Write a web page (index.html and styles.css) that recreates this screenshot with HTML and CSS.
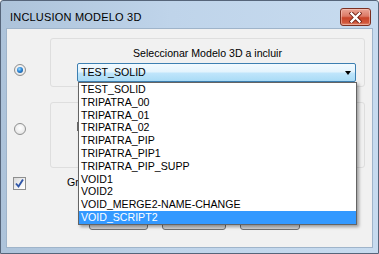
FILE: index.html
```html
<!DOCTYPE html>
<html>
<head>
<meta charset="utf-8">
<title>INCLUSION MODELO 3D</title>
<link rel="stylesheet" href="styles.css">
</head>
<body>
<div class="window">
  <div class="titlebar">
    <span class="title">INCLUSION MODELO 3D</span>
    <button class="close" aria-label="Cerrar">
      <svg width="13" height="11" viewBox="0 0 13 11">
        <path d="M2.5 1.5 L10.5 9.5 M10.5 1.5 L2.5 9.5" stroke="#6b1c10" stroke-width="4" stroke-linecap="square" fill="none"/>
        <path d="M2.5 1.5 L10.5 9.5 M10.5 1.5 L2.5 9.5" stroke="#ffffff" stroke-width="2.4" stroke-linecap="square" fill="none"/>
      </svg>
    </button>
  </div>
  <div class="client">
    <div class="row row1">
      <span class="radio checked"></span>
      <div class="group g1">
        <div class="glabel">Seleccionar Modelo 3D a incluir</div>
        <div class="combo-wrap">
          <div class="combo"><span class="combo-text">TEST_SOLID</span><span class="arrow"></span></div>
          <ul class="list">
            <li>TEST_SOLID</li>
            <li>TRIPATRA_00</li>
            <li>TRIPATRA_01</li>
            <li>TRIPATRA_02</li>
            <li>TRIPATRA_PIP</li>
            <li>TRIPATRA_PIP1</li>
            <li>TRIPATRA_PIP_SUPP</li>
            <li>VOID1</li>
            <li>VOID2</li>
            <li>VOID_MERGE2-NAME-CHANGE</li>
            <li class="sel">VOID_SCRIPT2</li>
          </ul>
        </div>
      </div>
    </div>
    <div class="row row2">
      <span class="radio"></span>
      <div class="group g2">
        <div class="field"></div>
      </div>
    </div>
    <div class="row row3">
      <span class="check">
        <svg width="11" height="11" viewBox="0 0 11 11">
          <path d="M2 5.5 L4.5 8.5 L9 1.5" stroke="#2f56a8" stroke-width="1.9" fill="none"/>
        </svg>
      </span>
      <span class="clabel">Gr</span>
    </div>
    <div class="buttons">
      <button class="btn b1" aria-label="Aceptar"></button>
      <button class="btn b2" aria-label="Cancelar"></button>
      <button class="btn b3" aria-label="Ayuda"></button>
    </div>
  </div>
</div>
</body>
</html>
```
FILE: styles.css
```css
html, body {
  margin: 0;
  padding: 0;
}
body {
  width: 379px;
  height: 254px;
  overflow: hidden;
  background: #ffffff;
  font-family: "Liberation Sans", Arial, sans-serif;
}
.window {
  box-sizing: border-box;
  width: 379px;
  height: 254px;
  border: 1px solid #56657a;
  border-radius: 3px 3px 0 0;
  background: linear-gradient(90deg, #adc3da 0%, #bfd4ea 45%, #c7dbef 100%);
  padding: 0 5px 5px 5px;
  display: flex;
  flex-direction: column;
}
.titlebar {
  height: 27px;
  flex: none;
  display: flex;
  justify-content: space-between;
  align-items: flex-start;
  padding: 0 2px 0 4px;
}
.title {
  margin-top: 10px;
  font-size: 11px;
  line-height: 13px;
  color: #000;
  letter-spacing: 0.2px;
}
.close {
  margin-top: 7px;
  width: 31px;
  height: 18px;
  box-sizing: border-box;
  border: 1px solid #7b3022;
  border-radius: 3px;
  padding: 0;
  background: linear-gradient(#eaa596 0%, #dc7a66 45%, #c84429 55%, #d2583c 85%, #e08a70 100%);
  display: flex;
  align-items: center;
  justify-content: center;
  box-shadow: inset 0 0 0 1px rgba(255,220,210,0.45);
}
.close svg { display: block; }
.client {
  flex: 1;
  box-sizing: border-box;
  border: 1px solid #9fb4ca;
  background: #f1f1f1;
  padding: 9px 7px 0 6px;
  display: flex;
  flex-direction: column;
  font-size: 10.6px;
  color: #000;
}
.row {
  display: flex;
  align-items: flex-start;
}
.radio {
  box-sizing: border-box;
  width: 12px;
  height: 12px;
  border-radius: 50%;
  border: 1px solid #8f9090;
  background: radial-gradient(circle at 50% 40%, #ffffff 0%, #ececec 60%, #d6d6d6 100%);
  display: flex;
  align-items: center;
  justify-content: center;
  margin-left: 1px;
  flex: none;
}
.radio.checked::after {
  content: "";
  width: 6px;
  height: 6px;
  border-radius: 50%;
  background: radial-gradient(circle at 40% 35%, #9fdcff 0%, #2c86d6 45%, #0e437f 100%);
}
.row1 .radio { margin-top: 26px; }
.row2 .radio { margin-top: 21px; }
.group {
  box-sizing: border-box;
  flex: 1;
  margin-left: 24px;
  border: 1px solid #dedede;
  border-radius: 3px;
}
.g1 {
  height: 49px;
  padding-top: 8px;
}
.glabel {
  text-align: center;
  line-height: 13px;
  height: 13px;
}
.combo-wrap {
  position: relative;
  margin: 3px 0 0 26px;
  width: 279px;
}
.combo {
  box-sizing: border-box;
  height: 19px;
  border: 1px solid #3c7fb1;
  border-radius: 2px;
  background: linear-gradient(#f2faff 0%, #e4f4fd 45%, #bfe5fb 55%, #a9dbf6 100%);
  display: flex;
  align-items: center;
  justify-content: space-between;
  padding: 0 4px 0 3px;
}
.combo-text { line-height: 13px; }
.arrow {
  width: 0;
  height: 0;
  border-left: 3.5px solid transparent;
  border-right: 3.5px solid transparent;
  border-top: 4px solid #000;
}
.list {
  position: absolute;
  top: 100%;
  left: 1px;
  z-index: 10;
  box-sizing: border-box;
  width: 279px;
  margin: 0;
  padding: 0;
  list-style: none;
  background: #ffffff;
  border: 1px solid #646464;
  box-shadow: 2px 2px 3px rgba(0,0,0,0.35);
}
.list li {
  height: 12.8px;
  line-height: 12.8px;
  padding-left: 2px;
  white-space: nowrap;
}
.list li.sel {
  background: #3399ff;
  color: #ffffff;
}
.row2 { margin-top: 15px; }
.g2 {
  height: 66px;
  padding: 19px 0 0 26px;
}
.field {
  box-sizing: border-box;
  width: 200px;
  height: 9px;
  border-left: 1px solid #6a6a6a;
}
.row3 {
  margin-top: 9px;
}
.check {
  box-sizing: border-box;
  width: 13px;
  height: 13px;
  border: 1px solid #8e8f8f;
  background: linear-gradient(135deg, #d9d9d9 0%, #f4f4f4 60%, #ffffff 100%);
  display: flex;
  align-items: center;
  justify-content: center;
  flex: none;
}
.check svg { display: block; }
.clabel {
  margin-left: 41px;
  margin-top: -1px;
  line-height: 13px;
}
.buttons {
  display: flex;
  gap: 14px;
  margin-top: 17px;
  padding-left: 76px;
}
.btn {
  box-sizing: border-box;
  height: 23px;
  border: 1px solid #707070;
  border-radius: 3px;
  background: linear-gradient(#f2f2f2 0%, #ebebeb 50%, #dddddd 51%, #cfcfcf 100%);
  padding: 0;
}
.b1 { width: 59px; }
.b2 { width: 64px; }
.b3 { width: 60px; }
```
